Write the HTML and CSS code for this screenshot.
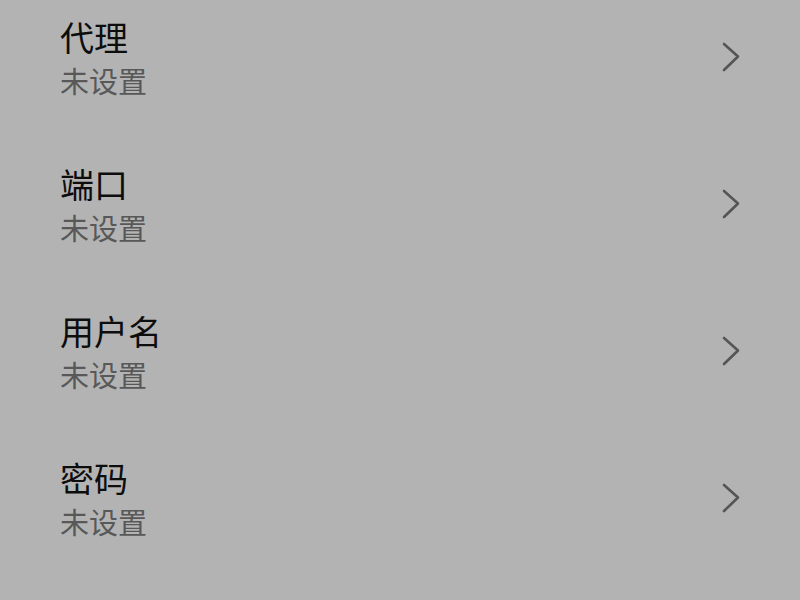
FILE: index.html
```html
<!DOCTYPE html>
<html lang="zh">
<head>
<meta charset="utf-8">
<link rel="stylesheet" href="styles.css">
</head>
<body>
<ul class="list">
  <li class="row">
    <div class="texts"><div class="title">代理</div><div class="sub">未设置</div></div>
    <svg class="chev" width="20" height="32" viewBox="0 0 20 32"><path d="M2 2 L16 14.5 L2 28" fill="none" stroke="#555" stroke-width="2.6" stroke-linecap="round" stroke-linejoin="round"/></svg>
  </li>
  <li class="row">
    <div class="texts"><div class="title">端口</div><div class="sub">未设置</div></div>
    <svg class="chev" width="20" height="32" viewBox="0 0 20 32"><path d="M2 2 L16 14.5 L2 28" fill="none" stroke="#555" stroke-width="2.6" stroke-linecap="round" stroke-linejoin="round"/></svg>
  </li>
  <li class="row">
    <div class="texts"><div class="title">用户名</div><div class="sub">未设置</div></div>
    <svg class="chev" width="20" height="32" viewBox="0 0 20 32"><path d="M2 2 L16 14.5 L2 28" fill="none" stroke="#555" stroke-width="2.6" stroke-linecap="round" stroke-linejoin="round"/></svg>
  </li>
  <li class="row">
    <div class="texts"><div class="title">密码</div><div class="sub">未设置</div></div>
    <svg class="chev" width="20" height="32" viewBox="0 0 20 32"><path d="M2 2 L16 14.5 L2 28" fill="none" stroke="#555" stroke-width="2.6" stroke-linecap="round" stroke-linejoin="round"/></svg>
  </li>
</ul>
</body>
</html>
```
FILE: styles.css
```css
html, body {
  margin: 0;
  padding: 0;
  background: #b3b3b3;
  width: 800px;
  height: 600px;
  overflow: hidden;
  font-family: "Noto Sans CJK SC", "Noto Sans", sans-serif;
}
.list {
  list-style: none;
  margin: 0;
  padding: 0;
}
.row {
  height: 147px;
  box-sizing: border-box;
  padding: 17px 58px 0 60px;
  display: flex;
  align-items: flex-start;
}
.texts {
  display: flex;
  flex-direction: column;
  gap: 3px;
}
.title {
  font-size: 34px;
  line-height: 40px;
  color: #0d0d0d;
  font-weight: 400;
}
.sub {
  font-size: 29px;
  line-height: 40px;
  color: #585858;
}
.chev {
  margin-left: auto;
  margin-top: 25px;
}
```
